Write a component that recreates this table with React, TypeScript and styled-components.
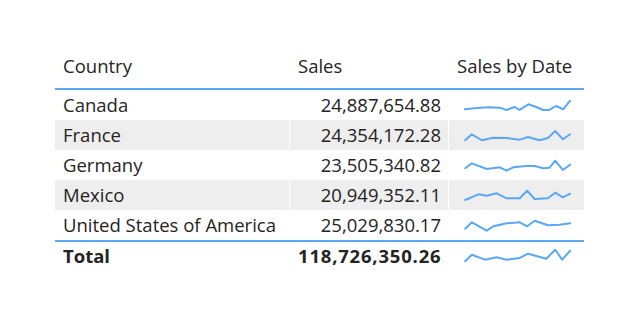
import styled, { createGlobalStyle } from 'styled-components';

const GlobalStyle = createGlobalStyle`
  body {
    margin: 0;
    background: #ffffff;
    font-family: 'Open Sans', 'Noto Sans', sans-serif;
  }
`;

type Point = [number, number];

type Row = {
  country: string;
  sales: string;
  trend: Point[];
};

const rows: Row[] = [
  {
    country: 'Canada',
    sales: '24,887,654.88',
    trend: [[15, 19.3], [27, 18], [39, 17.3], [50, 17.7], [57, 20], [65, 17], [70, 20], [79, 14.3], [87, 17], [94, 20], [100, 20], [107, 16], [114, 19.3], [121, 10.7]],
  },
  {
    country: 'France',
    sales: '24,354,172.28',
    trend: [[15.3, 20.3], [22, 14.3], [32, 20.3], [43.7, 17.7], [57, 18], [70.3, 19.7], [78.7, 17], [90.3, 20.3], [98.7, 18], [106, 11], [113.7, 19.3], [121, 14.3]],
  },
  {
    country: 'Germany',
    sales: '23,505,340.82',
    trend: [[15.3, 18.3], [22, 13.3], [37, 19], [50.3, 17.3], [57, 20.7], [63.7, 17.3], [77, 16], [85.3, 16], [93.7, 18.3], [100.3, 17.7], [106, 10.7], [113.7, 20], [121, 14.7]],
  },
  {
    country: 'Mexico',
    sales: '20,949,352.11',
    trend: [[15.3, 20], [28.7, 14.3], [37, 15.7], [47, 13.3], [57, 18.3], [70.3, 18.3], [77.7, 10.7], [85.3, 19], [98.7, 18.3], [106, 12.7], [113.7, 17.3], [121, 13.7]],
  },
  {
    country: 'United States of America',
    sales: '25,029,830.17',
    trend: [[15.3, 18.7], [22, 12.3], [37, 20.7], [43.7, 16.3], [57, 13.3], [70.3, 12.3], [77.7, 16.3], [85.3, 10.7], [98.7, 15.3], [110.3, 14.7], [121, 13.3]],
  },
];

const totalTrend: Point[] = [[15.3, 19.3], [22, 12.7], [35.3, 17.7], [47, 15.3], [57, 17.7], [70.3, 16], [78.7, 11.7], [97, 16.7], [106, 7.7], [113, 17.7], [121, 8.7]];

const Page = styled.div`
  padding: 51px 42px 0 55px;
`;

const Table = styled.div`
  width: 529px;
  color: #252423;
  font-size: 18.5px;
`;

const Line = styled.div<{ $variant: 'header' | 'body' | 'total' }>`
  display: grid;
  grid-template-columns: 234px 159px 136px;
  height: ${({ $variant }) => ($variant === 'header' ? '37px' : $variant === 'total' ? '28px' : '30px')};
  align-items: ${({ $variant }) => ($variant === 'header' ? 'start' : 'center')};
  font-weight: ${({ $variant }) => ($variant === 'total' ? 700 : 400)};
  border-bottom: ${({ $variant }) => ($variant === 'header' ? '2px solid #5ea9f5' : 'none')};
  border-top: ${({ $variant }) => ($variant === 'total' ? '2px solid #5ea9f5' : 'none')};
  line-height: ${({ $variant }) => ($variant === 'total' ? '28px' : '30px')};

  &:nth-child(even) {
    background: ${({ $variant }) => ($variant === 'body' ? '#eeeeee' : 'transparent')};
  }
`;

const Cell = styled.div<{ $align?: 'left' | 'right'; $wide?: boolean }>`
  height: 100%;
  padding: 0 7px 0 8px;
  text-align: ${({ $align }) => $align ?? 'left'};
  letter-spacing: ${({ $wide }) => ($wide ? '0.8px' : 'normal')};
  white-space: nowrap;

  & + & {
    border-left: 1px solid #ffffff;
  }
`;

const ChartCell = styled.div`
  height: 100%;
  border-left: 1px solid #ffffff;
  display: flex;
  align-items: center;
`;

const Spark = ({ points, height }: { points: Point[]; height: number }) => (
  <svg width={136} height={height} viewBox={`-1 0 136 ${height}`} style={{ display: 'block' }}>
    <polyline
      points={points.map(([x, y]) => `${x},${y}`).join(' ')}
      fill="none"
      stroke="#5ba7f4"
      strokeWidth={2}
      strokeLinejoin="round"
      strokeLinecap="round"
    />
  </svg>
);

const App = () => {
  return (
    <Page>
      <GlobalStyle />
      <Table>
        <Line $variant="header">
          <Cell>Country</Cell>
          <Cell>Sales</Cell>
          <Cell>Sales by Date</Cell>
        </Line>
        <div>
          {rows.map((r) => (
            <Line $variant="body" key={r.country}>
              <Cell>{r.country}</Cell>
              <Cell $align="right">{r.sales}</Cell>
              <ChartCell>
                <Spark points={r.trend} height={30} />
              </ChartCell>
            </Line>
          ))}
        </div>
        <Line $variant="total">
          <Cell>Total</Cell>
          <Cell $align="right" $wide>118,726,350.26</Cell>
          <ChartCell>
            <Spark points={totalTrend} height={28} />
          </ChartCell>
        </Line>
      </Table>
    </Page>
  );
};

export default App;
